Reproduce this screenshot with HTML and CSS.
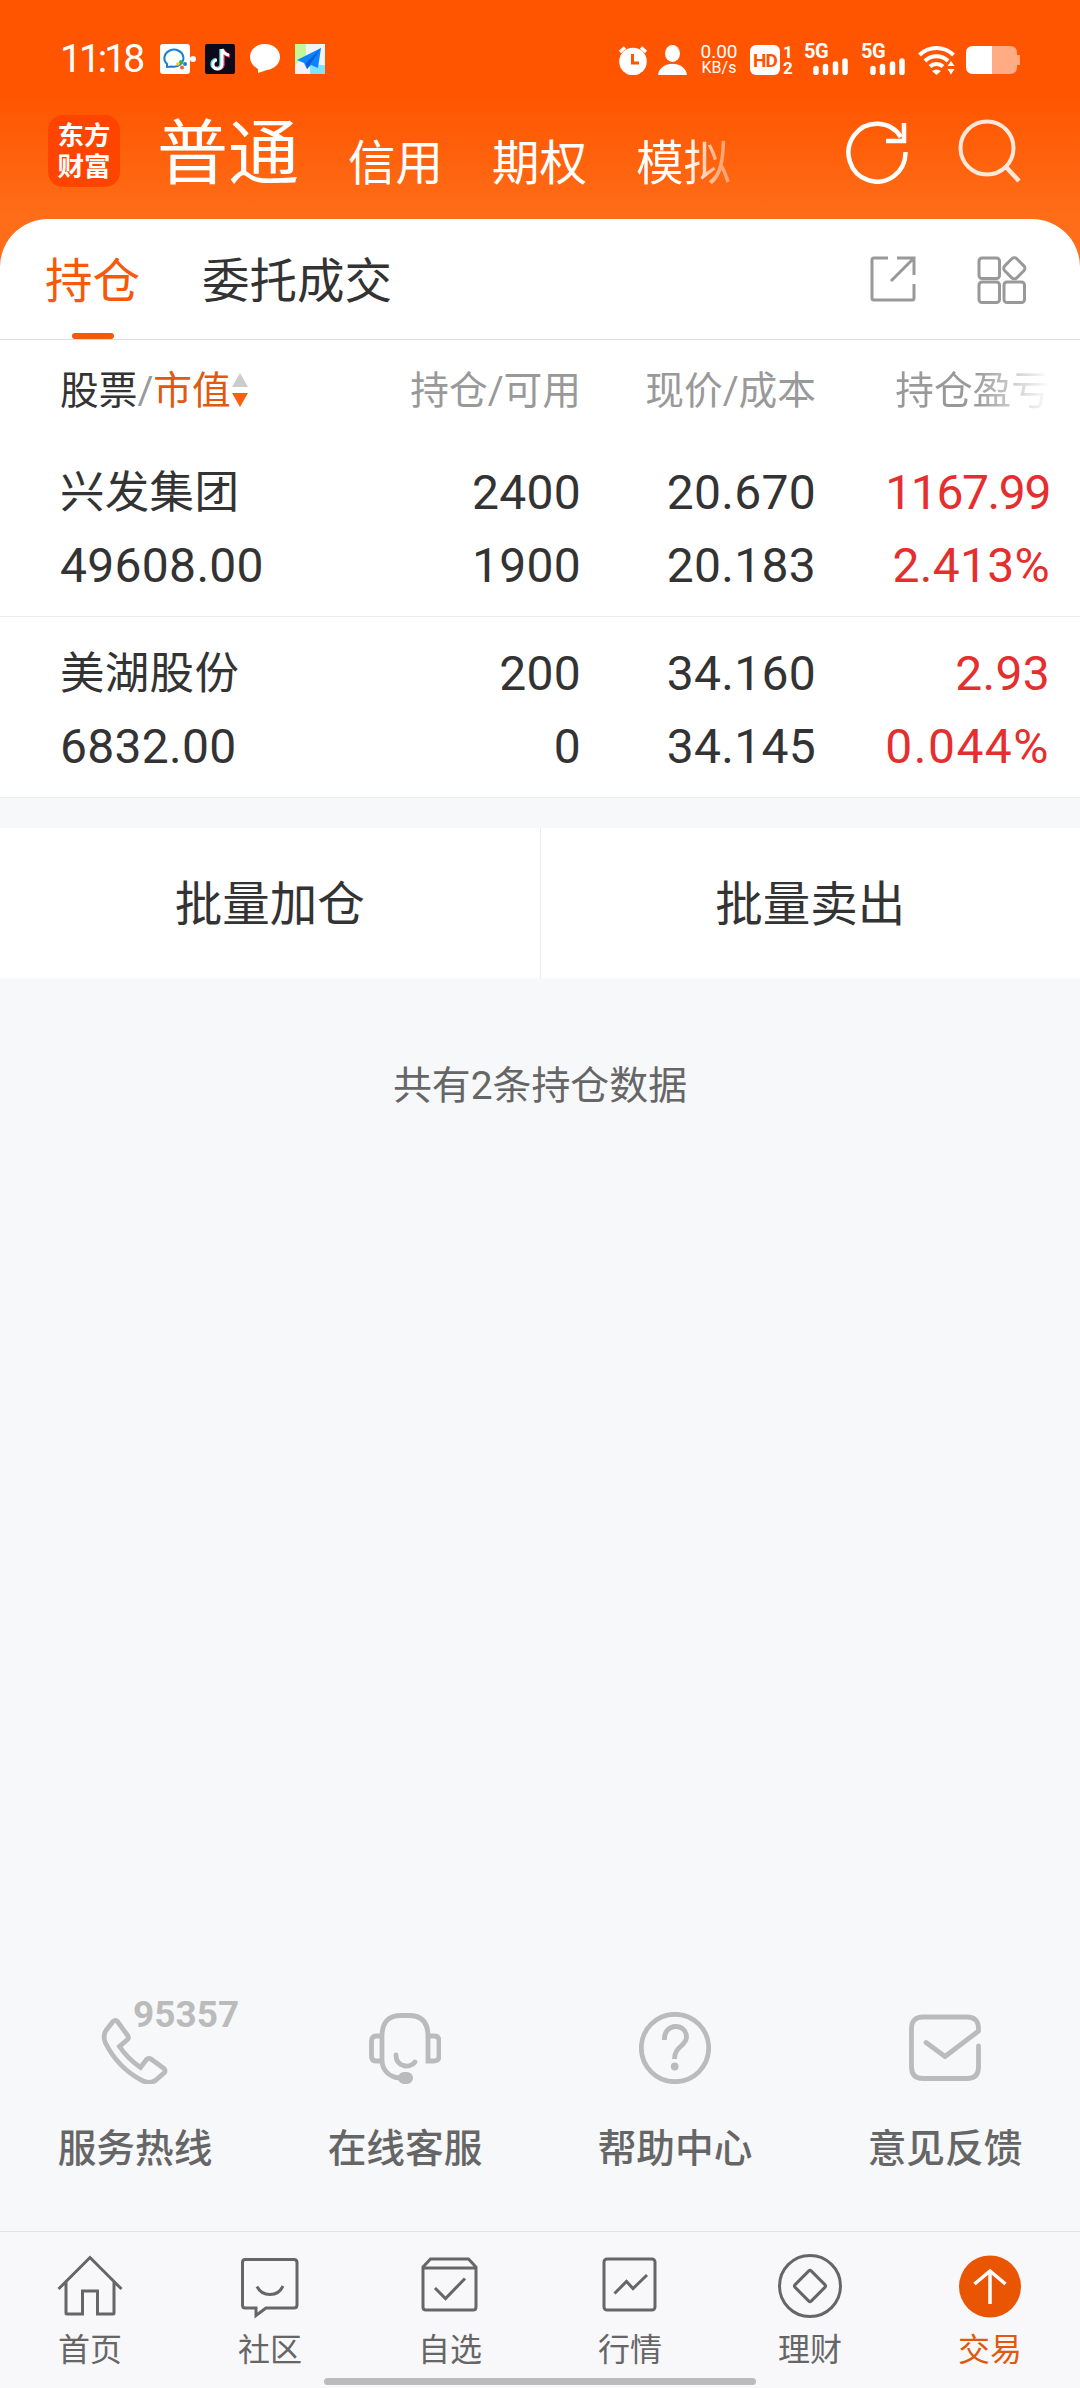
FILE: index.html
```html
<!DOCTYPE html>
<html lang="zh-CN">
<head>
    <meta charset="UTF-8">
    <title>交易 - 持仓</title>
    <link rel="stylesheet" href="styles.css">
</head>
<body>
    <div class="top">
        <!-- Status bar -->
        <div class="status">
            <div class="time">11:18</div>
            <svg class="notices" width="166" height="30" viewBox="0 0 166 30">
                <rect width="30" height="30" rx="3" fill="#fff"/>
                <path d="M7 23 L7 20 A9.500 8.500 0 1 1 12 22.500 Z" fill="none" stroke="#1a7fd0" stroke-width="2"/>
                <circle cx="21" cy="18" r="2" fill="#35b34a"/>
                <circle cx="25" cy="20" r="2" fill="#1a7fd0"/>
                <circle cx="18" cy="20" r="1.800" fill="#f5c518"/>
                <circle cx="22" cy="23.500" r="2" fill="#e9682c"/>
                <circle cx="33" cy="15" r="3" fill="#fff"/>
                <rect x="45" width="30" height="30" rx="2" fill="#0c0a1a"/>
                <path d="M61 5 V20 A4.500 4.500 0 1 1 56 15.500" fill="none" stroke="#35e0e0" stroke-width="3.500"/>
                <path d="M63 6 V21 A4.500 4.500 0 0 1 55 23 M63 6 Q65 11 70 12" fill="none" stroke="#f8355e" stroke-width="3.500"/>
                <path d="M62 5 V20.500 A4.500 4.500 0 1 1 57 16 M62 5 Q64 10.500 69 11" fill="none" stroke="#fff" stroke-width="3"/>
                <path d="M105 0 C114 0 120 6 120 13 C120 20 114 25 107 26 L98 29 L98 25 C93 22 90 18 90 13 C90 6 96 0 105 0 Z" fill="#fff"/>
                <rect x="135" width="30" height="30" fill="#f1f3f5"/>
                <path d="M135 0 H146 V12 L135 21 Z" fill="#c3f79a"/>
                <path d="M150 21 H165 V30 H150 Z" fill="#80e3ff"/>
                <path d="M161 4 L137 16 L144 19 L147 25 L151 21 L158 24 Z" fill="#0b84ff"/>
                <path d="M161 4 L146 19 L147 25 Z" fill="#0b5fd0"/>
            </svg>
            <div class="status-right">
                <svg width="70" height="30" viewBox="0 0 70 30">
                    <circle cx="15" cy="16.500" r="13.800" fill="#fff"/>
                    <path d="M2 7 L7 2.500 M28 7 L23 2.500" stroke="#fff" stroke-width="3.500"/>
                    <path d="M14.500 9 V18 H21" fill="none" stroke="#ff5500" stroke-width="3"/>
                    <ellipse cx="54.500" cy="8.500" rx="7.500" ry="8.500" fill="#fff"/>
                    <path d="M40 30 C42 15 67 15 69 30 Z" fill="#fff"/>
                </svg>
                <div class="speed"><span>0.00</span><span class="unit">KB/s</span></div>
                <div class="hd">HD</div>
                <div class="sim"><span>1</span><span>2</span></div>
                <div class="signal">
                    <span>5G</span>
                    <svg width="36" height="17" viewBox="0 0 36 17"><path d="M3 10.500 V14.500 M12.500 8.500 V14.500 M22.500 6 V14.500 M32 3 V14.500" stroke="#fff" stroke-width="5.500" stroke-linecap="round"/></svg>
                </div>
                <div class="signal">
                    <span>5G</span>
                    <svg width="36" height="17" viewBox="0 0 36 17"><path d="M3 10.500 V14.500 M12.500 8.500 V14.500 M22.500 6 V14.500 M32 3 V14.500" stroke="#fff" stroke-width="5.500" stroke-linecap="round"/></svg>
                </div>
                <svg class="wifi" width="38" height="30" viewBox="0 0 38 30">
                    <path d="M1.500 10 A24 24 0 0 1 35.500 10 M7 16 A16.500 16.500 0 0 1 30 16 M12 21.500 A9.500 9.500 0 0 1 25 21.500" fill="none" stroke="#fff" stroke-width="4"/>
                    <path d="M14 26 Q18.500 23 23 26 L18.500 30 Z M29.500 21 L33 16 L36.500 21 Z M29.500 24 L33 29.500 L36.500 24 Z" fill="#fff"/>
                </svg>
                <svg width="54" height="28" viewBox="0 0 54 28">
                    <path d="M26 0 H44 Q51 0 51 7 V9 H54 V19 H51 V21 Q51 28 44 28 H26 Z" fill="#ffab84"/>
                    <path d="M26 0 H7 Q0 0 0 7 V21 Q0 28 7 28 H26 Z" fill="#fff"/>
                </svg>
            </div>
        </div>

        <!-- App header -->
        <div class="header">
            <div class="logo">东方<br>财富</div>
            <div class="accounts">
                <span class="account current">普通</span>
                <span class="account">信用</span>
                <span class="account">期权</span>
                <span class="account">模拟</span>
            </div>
            <svg class="refresh" width="62" height="64" viewBox="0 0 62 64">
                <path d="M59.500 32 A28.500 29 0 1 1 55 17" fill="none" stroke="#fff" stroke-width="4.500"/>
                <path d="M58 3 V21 H40" fill="none" stroke="#fff" stroke-width="4.500"/>
            </svg>
            <svg width="64" height="64" viewBox="0 0 64 64">
                <circle cx="29" cy="29" r="26.500" fill="none" stroke="#ffe7da" stroke-width="4"/>
                <path d="M48 48 L61 62" stroke="#ffe7da" stroke-width="4.500"/>
            </svg>
        </div>
    </div>

    <div class="panel">
        <div class="tabs">
            <div class="tab active">持仓</div>
            <div class="tab">委托成交</div>
            <div class="tools">
                <svg width="46" height="46" viewBox="0 0 46 46" fill="none" stroke="#999" stroke-width="3">
                    <path d="M18 2 H4 Q2 2 2 4 V42 Q2 44 4 44 H42 Q44 44 44 42 V28 M27 2 H44 V19 M44 2 L21 25"/>
                </svg>
                <svg width="50" height="48" viewBox="0 0 50 48" fill="none" stroke="#999" stroke-width="3">
                    <rect x="2" y="2" width="20.500" height="20.500" rx="3"/>
                    <rect x="2" y="26" width="20.500" height="20.500" rx="3"/>
                    <rect x="27" y="26" width="20.500" height="20.500" rx="3"/>
                    <rect x="28.800" y="3.800" width="17" height="17" rx="3.500" transform="rotate(45 37.300 12.300)"/>
                </svg>
            </div>
        </div>

        <div class="row head">
            <div class="name"><span class="dark">股票</span>/<span class="orange">市值</span><svg width="16" height="35" viewBox="0 0 16 35"><path d="M0 14 L8 0 L16 14 Z" fill="#ccc"/><path d="M0 20 H16 L8 34 Z" fill="#f8610f"/></svg></div>
            <div class="amount">持仓/可用</div>
            <div class="price">现价/成本</div>
            <div class="profit">持仓盈亏</div>
        </div>

        <div class="row stock">
            <div class="name"><p class="cn">兴发集团</p><p>49608.00</p></div>
            <div class="amount"><p>2400</p><p>1900</p></div>
            <div class="price"><p>20.670</p><p>20.183</p></div>
            <div class="profit"><p class="tight">1167.99</p><p>2.413%</p></div>
        </div>
        <div class="row stock">
            <div class="name"><p class="cn">美湖股份</p><p>6832.00</p></div>
            <div class="amount"><p>200</p><p>0</p></div>
            <div class="price"><p>34.160</p><p>34.145</p></div>
            <div class="profit"><p>2.93</p><p class="wide">0.044%</p></div>
        </div>
    </div>

    <div class="actions">
        <div class="action">批量加仓</div>
        <div class="action">批量卖出</div>
    </div>

    <div class="total">共有2条持仓数据</div>

    <!-- Customer service -->
    <div class="services">
        <div class="service">
            <svg width="72" height="72" viewBox="0 0 72 72">
                <path d="M14 9.500 Q16.500 7.500 18.500 9.500 L29 24 Q30 26 28.500 27.500 L20.500 34.500 Q29 47 41.500 55.500 L47.500 47.500 Q49.500 45.500 52 47 L65 56.500 Q67 59 65 61 L57 68 Q51 72.500 43 68.500 C25 59 13 44 6.500 31 Q3.500 24 7 18.500 Z"/>
            </svg>
            <span class="hotline">95357</span>
            <div>服务热线</div>
        </div>
        <div class="service">
            <svg width="72" height="72" viewBox="0 0 72 72">
                <path d="M13 24 V48 C13 58 20 65 30 66 M13 24 Q13 3.500 32 3.500 H40 Q59 3.500 59 24 V49 H65 Q70 49 70 44 V29 Q70 24 65 24 H59 M13 24 H7 Q2.500 24 2.500 29 V44 Q2.500 49 7 49 H13"/>
                <path d="M27 43 C27 55 41 57 46 50" stroke-linecap="round"/>
                <rect x="32" y="63" width="9" height="6" rx="3" stroke-width="6"/>
            </svg>
            <div>在线客服</div>
        </div>
        <div class="service">
            <svg width="72" height="72" viewBox="0 0 72 72">
                <circle cx="36" cy="36" r="33.700"/>
                <path d="M25.300 28 C25 10 47.500 11 47.500 25 C47.500 34 35.500 34 35.500 47"/>
                <circle cx="35.700" cy="54.500" r="3.900" fill="#bbb" stroke="none"/>
            </svg>
            <div>帮助中心</div>
        </div>
        <div class="service">
            <svg width="72" height="72" viewBox="0 0 72 72">
                <path d="M17 30.500 L36 44.500 L69.500 19 V17 Q69.500 5 58 5 H14 Q2.500 5 2.500 17 V55 Q2.500 66.500 14 66.500 H58 Q69.500 66.500 69.500 55 V34" stroke-linecap="round" stroke-linejoin="round"/>
            </svg>
            <div>意见反馈</div>
        </div>
    </div>

    <!-- Bottom navigation -->
    <div class="nav">
        <div class="nav-item">
            <svg width="66" height="66" viewBox="0 0 66 66"><path d="M1.500 36 L33 4.500 L64.500 36 M9 29 V60 Q9 61 10 61 H25.500 V38 H40.500 V61 H56 Q57 61 57 60 V29"/></svg>
            <div>首页</div>
        </div>
        <div class="nav-item">
            <svg width="66" height="66" viewBox="0 0 66 66"><path d="M8 6.500 H57 Q60 6.500 60 9.500 V52 Q60 55 57 55 H29 L19 62.500 V55 H8 Q5.500 55 5.500 52 V9.500 Q5.500 6.500 8 6.500 Z M20 33.500 Q24 41.500 33 41.500 Q42 41.500 46 33"/></svg>
            <div>社区</div>
        </div>
        <div class="nav-item">
            <svg width="66" height="66" viewBox="0 0 66 66"><path d="M6 14 L13.500 6 H51.500 L59 14 V54 Q59 57 56 57 H9 Q6 57 6 54 Z M6 15 H59 M18 35 L28.500 45.500 L48 25.500"/></svg>
            <div>自选</div>
        </div>
        <div class="nav-item">
            <svg width="66" height="66" viewBox="0 0 66 66"><rect x="7" y="6" width="51" height="51" rx="3"/><path d="M17.500 40.500 L29.500 28.500 L36 35.500 L50 22"/></svg>
            <div>行情</div>
        </div>
        <div class="nav-item">
            <svg width="66" height="66" viewBox="0 0 66 66"><circle cx="33" cy="33" r="30.500"/><rect x="21.500" y="21.500" width="23" height="23" rx="2" transform="rotate(45 33 33)"/></svg>
            <div>理财</div>
        </div>
        <div class="nav-item selected">
            <svg width="66" height="66" viewBox="0 0 66 66"><circle cx="33" cy="33.500" r="31" fill="#ea5504" stroke="none"/><path d="M33 51 V18.500 M17.500 31 L33 18 L48.500 31" stroke="#fff" stroke-width="3.500"/></svg>
            <div>交易</div>
        </div>
        <div class="home-bar"></div>
    </div>
</body>
</html>
```

FILE: styles.css
```css
* {
    box-sizing: border-box;
}

body {
    margin: 0;
    height: 2388px;
    display: flex;
    flex-direction: column;
    background: #f7f8fa;
    color: #333;
    font-family: Roboto, "Noto Sans CJK SC", sans-serif;
    overflow: hidden;
}

p {
    margin: 0;
}

svg {
    display: block;
    flex: none;
}

/* Orange header */
.top {
    height: 267px;
    background: linear-gradient(#ff5500 95px, #ff6d18 215px);
    color: #fff;
    flex: none;
}

.status {
    display: flex;
    align-items: flex-start;
    padding: 44px 60px 0 60px;
    height: 104px;
}

.time {
    width: 100px;
    font-size: 39px;
    line-height: 30px;
    letter-spacing: -3px;
}

.status-right {
    display: flex;
    align-items: center;
    height: 31px;
    margin-left: auto;
}

.speed {
    display: flex;
    flex-direction: column;
    width: 38px;
    margin-left: 12px;
    font-size: 19px;
    line-height: 15px;
    text-align: center;
}

.speed .unit {
    margin-top: 1px;
    font-size: 16px;
}

.hd {
    width: 30px;
    height: 30px;
    margin-left: 12px;
    border-radius: 6px;
    background: #fff;
    color: #ff5500;
    font-size: 19px;
    font-weight: bold;
    line-height: 31px;
    text-align: center;
    letter-spacing: -1px;
}

.sim {
    display: flex;
    flex-direction: column;
    width: 12px;
    margin-left: 2px;
    font-size: 17px;
    font-weight: bold;
    line-height: 16px;
    text-align: center;
}

.signal {
    width: 45px;
    height: 31px;
    margin-left: 10px;
    font-size: 20px;
    font-weight: bold;
    line-height: 15px;
    letter-spacing: -0.5px;
}

.signal + .signal {
    margin-left: 12px;
}

.signal span {
    display: block;
}

.signal svg {
    margin: -1px 0 0 9px;
}

.wifi {
    margin: 0 10px 0 12px;
}

.header {
    display: flex;
    align-items: flex-start;
    padding: 11px 58px 0 48px;
}

.logo {
    width: 72px;
    height: 72px;
    padding-top: 5px;
    border-radius: 15px;
    background: #ff4400;
    font-size: 26.5px;
    font-weight: bold;
    line-height: 31px;
    text-align: center;
}

.accounts {
    display: flex;
    align-items: flex-start;
    width: 620px;
    margin: -6px 0 0 37px;
    font-size: 47.5px;
    line-height: 90px;
}

.account {
    margin: 10px 0 0 49px;
}

.account.current {
    margin: 0;
    font-size: 71px;
}

.account:last-child {
    background: linear-gradient(90deg, #fff 55%, #ffa675 90%);
    -webkit-background-clip: text;
    color: transparent;
}

.refresh {
    margin: 5px 50px 0 auto;
}

.header svg:last-child {
    margin-top: 4px;
}

/* White panel */
.panel {
    margin-top: -48px;
    border-radius: 48px 48px 0 0;
    background: #fff;
    flex: none;
}

.tabs {
    display: flex;
    height: 121px;
    padding: 0 53px 0 45px;
    border-bottom: 1px solid #ddd;
    font-size: 47.5px;
    line-height: 126px;
}

.tab {
    position: relative;
    height: 120px;
    margin-right: 62px;
}

.tab.active {
    color: #f55a0b;
}

.tab.active::after {
    content: "";
    position: absolute;
    left: 27px;
    bottom: 0;
    width: 42px;
    height: 6px;
    border-radius: 3px;
    background: #f55a0b;
}

.tools {
    display: flex;
    align-items: flex-start;
    gap: 61px;
    margin-left: auto;
    padding-top: 37px;
}

.row {
    display: grid;
    grid-template-columns: 280px 241px 235px 234px;
    padding-left: 60px;
    text-align: right;
}

.name {
    text-align: left;
}

.head {
    height: 96px;
    color: #999;
    font-size: 38.7px;
    line-height: 101px;
}

.head .name {
    display: flex;
    align-items: center;
    height: 101px;
}

.head .name svg {
    margin-left: 1px;
}

.dark {
    color: #333;
}

.orange {
    color: #e0590f;
}

.head .profit {
    background: linear-gradient(90deg, #999 68%, #fff 100%);
    -webkit-background-clip: text;
    color: transparent;
}

.stock {
    height: 181px;
    padding-top: 20px;
    border-bottom: 1px solid #ebecee;
    font-size: 48px;
    line-height: 73px;
    letter-spacing: 0.3px;
}

.stock p {
    height: 73px;
}

.stock .cn {
    font-size: 44.5px;
    line-height: 75px;
}

.stock .profit {
    color: #e52e2e;
}

.stock .tight {
    letter-spacing: -1.4px;
}

.stock .wide {
    letter-spacing: 1.5px;
}

.actions {
    display: flex;
    height: 150px;
    margin-top: 30px;
    background: #fff;
    flex: none;
}

.action {
    flex: 1;
    font-size: 47.5px;
    line-height: 154px;
    text-align: center;
}

.action + .action {
    border-left: 1px solid #ebecee;
}

.total {
    margin-top: 78px;
    color: #666;
    font-size: 38.9px;
    line-height: 60px;
    text-align: center;
}

/* Customer service */
.services {
    display: flex;
    margin-top: auto;
    height: 219px;
    flex: none;
}

.service {
    position: relative;
    width: 270px;
    color: #666;
    font-size: 38.7px;
    font-weight: 500;
    line-height: 58px;
    text-align: center;
}

.service svg {
    margin: 0 auto 36px;
    fill: none;
    stroke: #bbb;
    stroke-width: 4.8;
}

/* Number sits on top of the phone icon */
.hotline {
    position: absolute;
    top: -19px;
    left: 133px;
    color: #bbb;
    font-size: 37px;
    font-weight: bold;
    line-height: 44px;
}

/* Bottom navigation */
.nav {
    position: relative;
    display: flex;
    height: 157px;
    padding-top: 21px;
    border-top: 1px solid #e3e4e6;
    background: #f8f8fb;
    flex: none;
}

.nav-item {
    width: 180px;
    color: #666;
    font-size: 32px;
    line-height: 48px;
    text-align: center;
}

.nav-item svg {
    margin: 0 auto 7px;
    fill: none;
    stroke: #666;
    stroke-width: 3;
}

.nav-item.selected {
    color: #e0590f;
}

.home-bar {
    position: absolute;
    left: 324px;
    bottom: 3px;
    width: 432px;
    height: 7px;
    border-radius: 4px;
    background: #bbb;
}
```
